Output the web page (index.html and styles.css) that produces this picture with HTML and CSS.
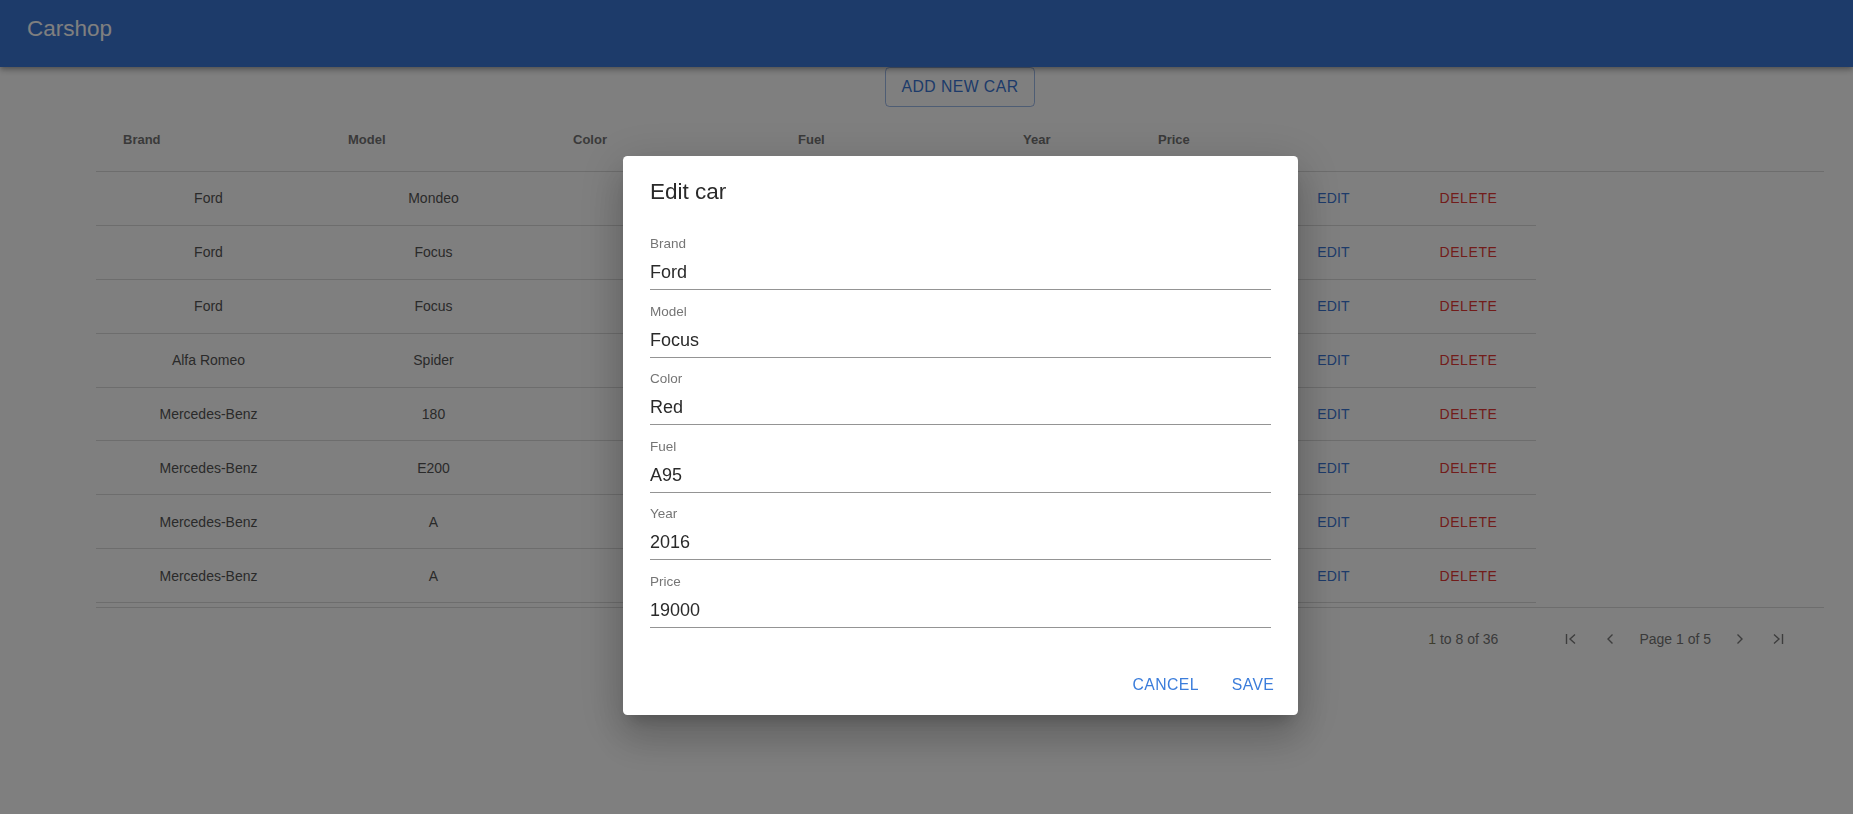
FILE: index.html
```html
<!DOCTYPE html>
<html lang="en">
<head>
<meta charset="utf-8">
<title>Carshop</title>
<link rel="stylesheet" href="styles.css">
</head>
<body>
<header class="appbar">
  <h1 class="appbar-title">Carshop</h1>
</header>

<main class="content">
  <div class="toolbar">
    <button class="btn-outlined">ADD NEW CAR</button>
  </div>

  <div class="grid">
    <div class="grid-header">
      <div class="hcell">Brand</div>
      <div class="hcell">Model</div>
      <div class="hcell">Color</div>
      <div class="hcell">Fuel</div>
      <div class="hcell">Year</div>
      <div class="hcell">Price</div>
      <div class="hcell"></div>
      <div class="hcell"></div>
    </div>

    <div class="grid-body">
      <div class="row">
        <div class="cell">Ford</div><div class="cell">Mondeo</div><div class="cell">Silver</div><div class="cell">Diesel</div><div class="cell">2014</div><div class="cell">16900</div>
        <div class="cell"><span class="link-edit">EDIT</span></div><div class="cell"><span class="link-delete">DELETE</span></div>
      </div>
      <div class="row">
        <div class="cell">Ford</div><div class="cell">Focus</div><div class="cell">Red</div><div class="cell">A95</div><div class="cell">2016</div><div class="cell">19000</div>
        <div class="cell"><span class="link-edit">EDIT</span></div><div class="cell"><span class="link-delete">DELETE</span></div>
      </div>
      <div class="row">
        <div class="cell">Ford</div><div class="cell">Focus</div><div class="cell">White</div><div class="cell">A95</div><div class="cell">2015</div><div class="cell">17500</div>
        <div class="cell"><span class="link-edit">EDIT</span></div><div class="cell"><span class="link-delete">DELETE</span></div>
      </div>
      <div class="row">
        <div class="cell">Alfa Romeo</div><div class="cell">Spider</div><div class="cell">Red</div><div class="cell">A98</div><div class="cell">2009</div><div class="cell">12000</div>
        <div class="cell"><span class="link-edit">EDIT</span></div><div class="cell"><span class="link-delete">DELETE</span></div>
      </div>
      <div class="row">
        <div class="cell">Mercedes-Benz</div><div class="cell">180</div><div class="cell">Black</div><div class="cell">Diesel</div><div class="cell">2012</div><div class="cell">15000</div>
        <div class="cell"><span class="link-edit">EDIT</span></div><div class="cell"><span class="link-delete">DELETE</span></div>
      </div>
      <div class="row">
        <div class="cell">Mercedes-Benz</div><div class="cell">E200</div><div class="cell">Grey</div><div class="cell">Diesel</div><div class="cell">2013</div><div class="cell">22000</div>
        <div class="cell"><span class="link-edit">EDIT</span></div><div class="cell"><span class="link-delete">DELETE</span></div>
      </div>
      <div class="row">
        <div class="cell">Mercedes-Benz</div><div class="cell">A</div><div class="cell">White</div><div class="cell">A95</div><div class="cell">2017</div><div class="cell">25000</div>
        <div class="cell"><span class="link-edit">EDIT</span></div><div class="cell"><span class="link-delete">DELETE</span></div>
      </div>
      <div class="row">
        <div class="cell">Mercedes-Benz</div><div class="cell">A</div><div class="cell">Blue</div><div class="cell">A95</div><div class="cell">2018</div><div class="cell">28000</div>
        <div class="cell"><span class="link-edit">EDIT</span></div><div class="cell"><span class="link-delete">DELETE</span></div>
      </div>
    </div>

    <div class="pager">
      <span class="pager-summary"><span class="pager-num">1</span> to 8 of 36</span>
      <svg class="pg-icon" width="16" height="16" viewBox="0 0 16 16"><path d="M3.5 3v10" /><path d="M12 3.5 7 8l5 4.5" /></svg>
      <svg class="pg-icon pg-prev" width="16" height="16" viewBox="0 0 16 16"><path d="M10.5 3.5 6 8l4.5 4.5" /></svg>
      <span class="pager-page">Page 1 of 5</span>
      <svg class="pg-icon pg-next" width="16" height="16" viewBox="0 0 16 16"><path d="M5.5 3.5 10 8l-4.5 4.5" /></svg>
      <svg class="pg-icon pg-last" width="16" height="16" viewBox="0 0 16 16"><path d="M4 3.5 9 8l-5 4.5" /><path d="M12.5 3v10" /></svg>
    </div>
  </div>
</main>

<div class="backdrop">
  <div class="dialog" role="dialog">
    <h2 class="dialog-title">Edit car</h2>
    <div class="dialog-content">
      <div class="field"><label class="field-label">Brand</label><div class="field-input">Ford</div></div>
      <div class="field"><label class="field-label">Model</label><div class="field-input">Focus</div></div>
      <div class="field"><label class="field-label">Color</label><div class="field-input">Red</div></div>
      <div class="field"><label class="field-label">Fuel</label><div class="field-input">A95</div></div>
      <div class="field"><label class="field-label">Year</label><div class="field-input">2016</div></div>
      <div class="field"><label class="field-label">Price</label><div class="field-input">19000</div></div>
    </div>
    <div class="dialog-actions">
      <button class="btn-text">CANCEL</button>
      <button class="btn-text">SAVE</button>
    </div>
  </div>
</div>
</body>
</html>
```

FILE: styles.css
```css
* { box-sizing: border-box; }

html, body {
  margin: 0;
  padding: 0;
  background: #ffffff;
  font-family: "Liberation Sans", Arial, sans-serif;
}

.appbar {
  position: relative;
  z-index: 2;
  height: 67px;
  background: #3b76d4;
  padding: 16px 27px 0;
  box-shadow: 0 2px 4px -1px rgba(0,0,0,0.2), 0 4px 5px 0 rgba(0,0,0,0.14), 0 1px 10px 0 rgba(0,0,0,0.12);
}

.appbar-title {
  margin: 0;
  font-size: 22.5px;
  font-weight: normal;
  line-height: 26px;
  color: #ffffff;
}

.content {
  margin-left: 96px;
  width: 1728px;
}

.toolbar {
  display: flex;
  justify-content: center;
}

.btn-outlined {
  height: 40px;
  padding: 0 16px;
  border: 1px solid rgba(59, 118, 212, 0.5);
  border-radius: 4.5px;
  background: transparent;
  color: #3b76d4;
  font-family: "Liberation Sans", Arial, sans-serif;
  font-size: 15.75px;
  letter-spacing: 0.45px;
  line-height: 1;
}

.grid-header {
  display: grid;
  grid-template-columns: 225px 225px 225px 225px 135px 135px 135px 135px;
  height: 65px;
  border-bottom: 1px solid #dadada;
}

.hcell {
  display: flex;
  align-items: center;
  padding-left: 27px;
  font-size: 13px;
  font-weight: bold;
  color: #757575;
  padding-top: 1px;
}

.grid-body {
  padding-bottom: 4px;
  border-bottom: 1px solid #dadada;
}

.row {
  display: grid;
  grid-template-columns: 225px 225px 225px 225px 135px 135px 135px 135px;
  width: 1440px;
  height: 53.9px;
  border-bottom: 1px solid #dadada;
}

.cell {
  display: flex;
  align-items: center;
  justify-content: center;
  font-size: 14px;
  color: #555555;
}

.link-edit {
  color: #3b76d4;
  font-size: 14px;
  letter-spacing: 0.2px;
}

.link-delete {
  color: #e53935;
  font-size: 14px;
  letter-spacing: 0.6px;
}

.pager {
  display: flex;
  justify-content: flex-end;
  align-items: center;
  height: 62px;
  padding-right: 38px;
  font-size: 14px;
  color: #757575;
}

.pager-summary {
  margin-right: 65px;
}

.pager-num {
  color: #7d7a5a;
}

.pg-icon {
  display: block;
  fill: none;
  stroke: #7a7a7a;
  stroke-width: 1.4;
}

.pg-prev { margin-left: 23px; }
.pager-page { margin-left: 21px; }
.pg-next { margin-left: 21px; }
.pg-last { margin-left: 22px; }

.backdrop {
  position: fixed;
  inset: 0;
  z-index: 10;
  background: rgba(0, 0, 0, 0.5);
}

.dialog {
  position: absolute;
  left: 623px;
  top: 156px;
  width: 675px;
  background: #ffffff;
  border-radius: 4.5px;
  box-shadow: 0 11px 15px -7px rgba(0,0,0,0.2), 0 24px 38px 3px rgba(0,0,0,0.14), 0 9px 46px 8px rgba(0,0,0,0.12);
  display: flex;
  flex-direction: column;
}

.dialog-title {
  margin: 0;
  padding: 18px 27px;
  font-size: 22.5px;
  font-weight: normal;
  line-height: 36px;
  color: #2a2a2a;
}

.dialog-content {
  display: flex;
  flex-direction: column;
  gap: 13.6px;
  padding: 8px 27px 27px;
}

.field {
  display: flex;
  flex-direction: column;
  border-bottom: 1px solid #949494;
}

.field-label {
  font-size: 13.5px;
  line-height: 16px;
  color: #757575;
}

.field-input {
  margin-top: 9px;
  padding-bottom: 6px;
  font-size: 18px;
  line-height: 22px;
  color: #2a2a2a;
}

.dialog-actions {
  display: flex;
  justify-content: flex-end;
  gap: 9px;
  padding: 9px;
}

.btn-text {
  min-width: 72px;
  height: 42px;
  padding: 0 9px;
  border: none;
  background: transparent;
  color: #3b7ddb;
  font-family: "Liberation Sans", Arial, sans-serif;
  font-size: 15.75px;
  letter-spacing: 0.45px;
  border-radius: 4.5px;
}
```
